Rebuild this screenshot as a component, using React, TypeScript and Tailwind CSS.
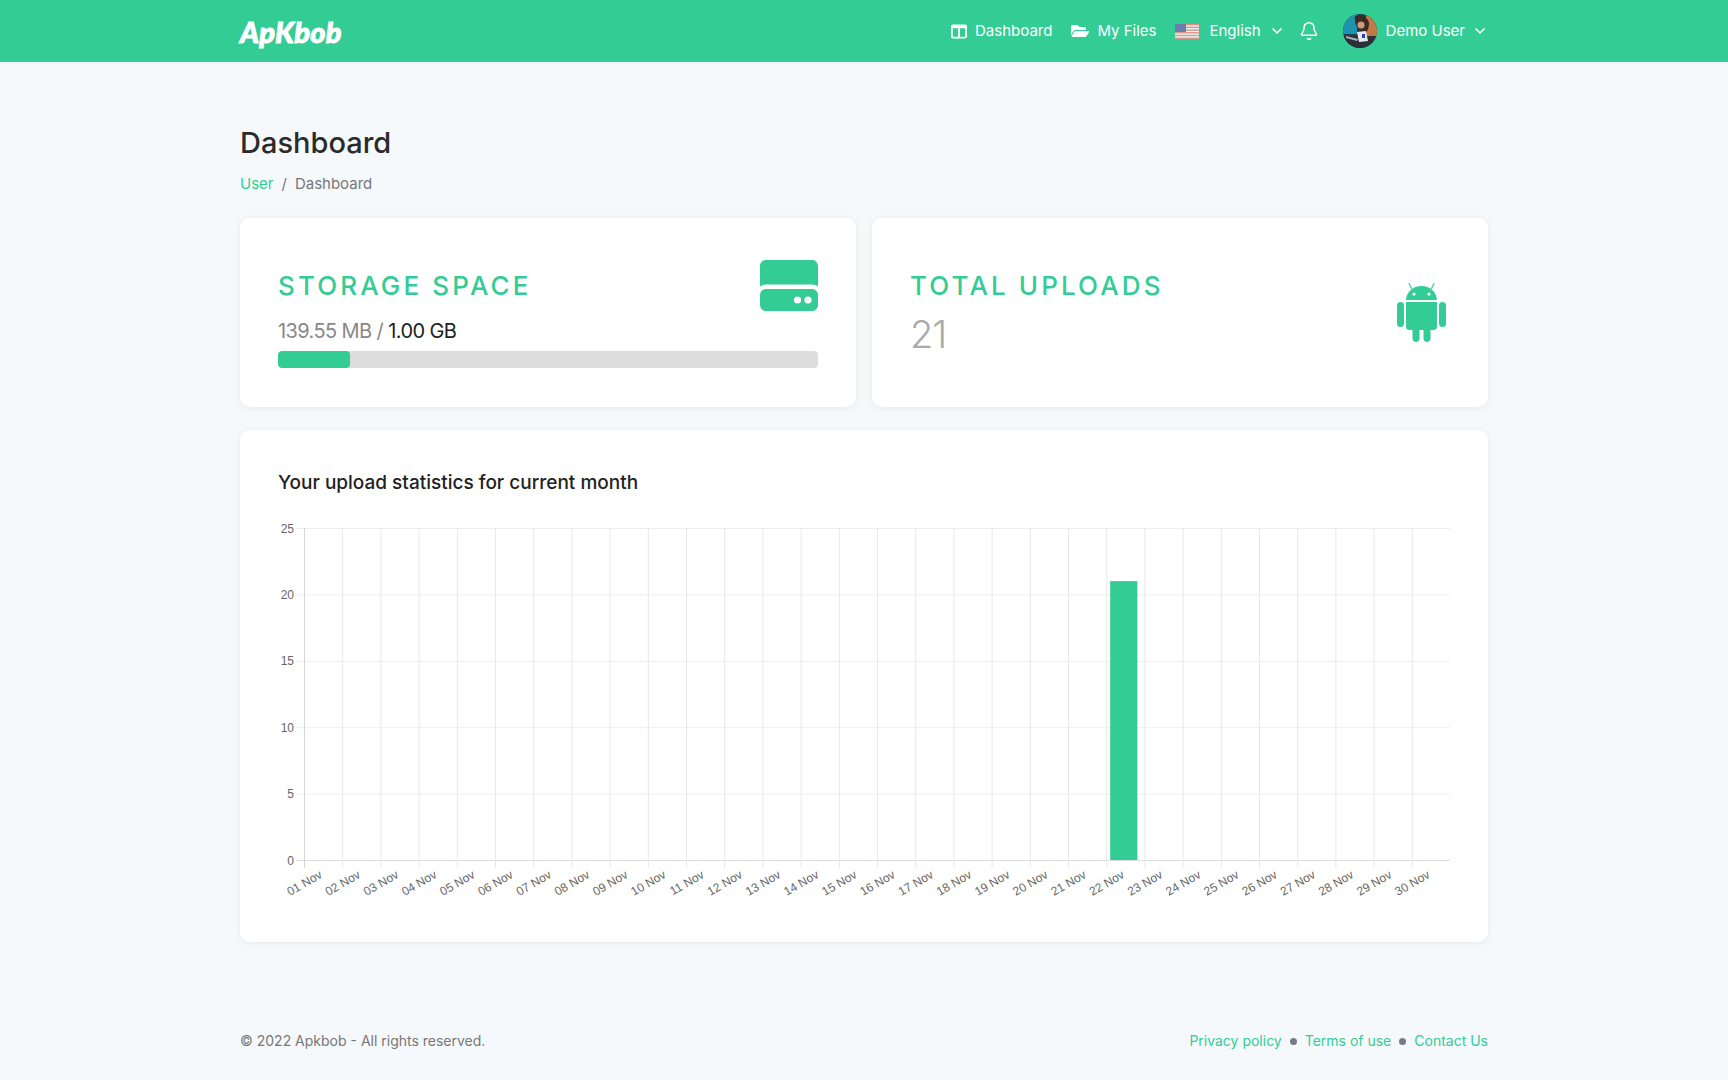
import { Bell, ChevronDown } from "lucide-react"
import { FaFolderOpen } from "react-icons/fa"

const ColumnsIcon = () => (
  <svg className="h-[15px] w-[16px]" viewBox="0 0 16 15" fill="none">
    <path fillRule="evenodd" clipRule="evenodd" d="M2 0.5H14C15.1 0.5 16 1.4 16 2.5V12.5C16 13.6 15.1 14.5 14 14.5H2C0.9 14.5 0 13.6 0 12.5V2.5C0 1.4 0.9 0.5 2 0.5ZM1.8 4.2V12.7H7.1V4.2H1.8ZM8.9 4.2V12.7H14.2V4.2H8.9Z" fill="#fff" />
  </svg>
)

const FlagIcon = () => (
  <svg className="h-[15px] w-[24px] opacity-90" viewBox="0 0 24 15">
    <rect width="24" height="15" fill="#fff" />
    <rect y="0" width="24" height="1.4" fill="#f28a8a" />
    <rect y="2.7" width="24" height="1.4" fill="#f28a8a" />
    <rect y="5.4" width="24" height="1.4" fill="#f28a8a" />
    <rect y="8.1" width="24" height="1.4" fill="#f28a8a" />
    <rect y="10.8" width="24" height="1.4" fill="#f28a8a" />
    <rect y="13.6" width="24" height="1.4" fill="#f28a8a" />
    <rect width="11" height="8" fill="#6f76b0" />
  </svg>
)

const Avatar = () => (
  <svg className="h-[34px] w-[34px]" viewBox="0 0 34 34">
    <defs>
      <clipPath id="av">
        <circle cx="17" cy="17" r="17" />
      </clipPath>
    </defs>
    <g clipPath="url(#av)">
      <rect width="34" height="34" fill="#1f3f4c" />
      <rect width="14" height="20" fill="#1d93ad" />
      <rect x="23" width="11" height="24" fill="#c27a45" />
      <rect y="22" width="34" height="12" fill="#2b2f36" />
      <path d="M12 2C18 0 26 3 26 10C26 14 24 18 22 19L16 17C13 12 11 7 12 2Z" fill="#3a2a24" />
      <circle cx="18" cy="11" r="3.6" fill="#c99a80" />
      <path d="M14 18L23 17L25 27L16 28Z" fill="#e8e8f0" />
      <rect x="19" y="20" width="3" height="4" fill="#2b3fc0" />
      <path d="M3 22L15 25L14 27L3 24Z" fill="#a9b3bb" />
    </g>
  </svg>
)

const DriveIcon = () => (
  <svg className="h-[51px] w-[58px]" viewBox="0 0 58 51">
    <path d="M6 0H52C55.3 0 58 2.7 58 6V26.5C56.5 25.2 54.5 24.5 52 24.5H6C3.5 24.5 1.5 25.2 0 26.5V6C0 2.7 2.7 0 6 0Z" fill="#33cc95" />
    <path fillRule="evenodd" clipRule="evenodd" d="M6 29H52C55.3 29 58 31.7 58 35V45C58 48.3 55.3 51 52 51H6C2.7 51 0 48.3 0 45V35C0 31.7 2.7 29 6 29Z" fill="#33cc95" />
    <circle cx="37.5" cy="40" r="3.6" fill="#fff" />
    <circle cx="48" cy="40" r="3.6" fill="#fff" />
  </svg>
)

const AndroidIcon = () => (
  <svg className="h-[59px] w-[49px]" viewBox="0 0 49 59" fill="#33cc95">
    <path d="M14.5 5.5L12 0.5M34.5 5.5L37 0.5" stroke="#33cc95" strokeWidth="1.2" strokeLinecap="round" />
    <path fillRule="evenodd" clipRule="evenodd" d="M24.5 3C33 3 39.5 9 40 17H9C9.5 9 16 3 24.5 3ZM17 9.5A1.6 1.6 0 1 0 17 12.7A1.6 1.6 0 1 0 17 9.5ZM32 9.5A1.6 1.6 0 1 0 32 12.7A1.6 1.6 0 1 0 32 9.5Z" />
    <path d="M9 19H40V44C40 46.2 38.2 47 36.5 47H33.5V55.5C33.5 57.5 31.9 59 30 59C28.1 59 26.5 57.5 26.5 55.5V47H22.5V55.5C22.5 57.5 20.9 59 19 59C17.1 59 15.5 57.5 15.5 55.5V47H12.5C10.8 47 9 46.2 9 44V19Z" />
    <rect x="0" y="19" width="7" height="25" rx="3.5" />
    <rect x="42" y="19" width="7" height="25" rx="3.5" />
  </svg>
)

const days = Array.from({ length: 30 }, (_, i) => String(i + 1).padStart(2, "0") + " Nov")
const yTicks = [0, 5, 10, 15, 20, 25]

const UploadChart = () => {
  const left = 26
  const right = 1172
  const top = 8
  const bottom = 340
  const col = (right - left) / 30
  const y = (v: number) => bottom - (v / 25) * (bottom - top)

  return (
    <svg className="block h-[385px] w-[1172px] font-['Liberation_Sans',Arial,sans-serif]" viewBox="0 0 1172 385">
      {yTicks.map((v) => (
        <g key={v}>
          <line x1={left - 8} x2={right} y1={y(v) + 0.5} y2={y(v) + 0.5} stroke={v === 0 ? "#dcdcdc" : "#eeeeee"} />
          <text x={left - 10} y={y(v) + 4.5} textAnchor="end" fontSize="12" fill="#666">{v}</text>
        </g>
      ))}
      {Array.from({ length: 31 }, (_, i) => (
        <line key={i} x1={left + i * col + 0.5} x2={left + i * col + 0.5} y1={top} y2={bottom + 8} stroke={i === 0 ? "#d5d5d5" : "#e8e8e8"} />
      ))}
      <rect x={left + 21 * col + 4} y={y(21)} width={col - 11} height={bottom - y(21)} fill="#33cc95" />
      {days.map((d, i) => {
        const x = left + i * col + 19
        return (
          <text key={d} x={x} y={357} transform={`rotate(-30 ${x} 357)`} textAnchor="end" fontSize="12" fill="#666">
            {d}
          </text>
        )
      })}
    </svg>
  )
}

export default function App() {
  return (
    <div className="flex min-h-screen flex-col bg-[#f5f9fc] font-['Inter',sans-serif] text-[#333]">
      <header className="h-[62px] bg-[#33cc95]">
        <div className="mx-auto flex h-full w-[1248px] items-center justify-between">
          <a className="font-['Lato',sans-serif] text-[29px] font-black italic leading-none tracking-[0.01em] text-white [-webkit-text-stroke:1px_white]">
            ApKbob
          </a>
          <nav className="flex items-center text-[15px] text-white">
            <a className="flex items-center gap-2">
              <ColumnsIcon />
              Dashboard
            </a>
            <a className="ml-[19px] flex items-center gap-2">
              <FaFolderOpen className="h-[16px] w-[18px]" />
              My Files
            </a>
            <a className="ml-[19px] flex items-center gap-[10px]">
              <FlagIcon />
              English
              <ChevronDown className="-ml-[2px] h-[16px] w-[16px]" strokeWidth={2.5} />
            </a>
            <Bell className="ml-[14px] h-[20px] w-[20px]" strokeWidth={1.8} />
            <a className="ml-[24px] flex items-center gap-[9px]">
              <Avatar />
              Demo User
              <ChevronDown className="-ml-[2px] h-[16px] w-[16px]" strokeWidth={2.5} />
            </a>
          </nav>
        </div>
      </header>

      <main className="mx-auto w-[1248px] flex-1 pt-[61px]">
        <h1 className="text-[29px] font-medium leading-[40px] text-[#2b2b2b]">Dashboard</h1>
        <div className="mt-[10px] flex items-center gap-[8px] text-[15px] leading-[22px] text-[#777]">
          <a className="text-[#33cc95]">User</a>
          <span>/</span>
          <span>Dashboard</span>
        </div>

        <div className="mt-[23px] grid grid-cols-2 gap-[16px]">
          <section className="h-[189px] rounded-[10px] bg-white px-[38px] pt-[42px] shadow-[0_1px_6px_rgba(0,0,0,0.07)]">
            <div className="flex items-start justify-between">
              <h2 className="pt-[10px] text-[26px] font-medium leading-[32px] tracking-[0.12em] text-[#33cc95]">STORAGE SPACE</h2>
              <DriveIcon />
            </div>
            <p className="mt-[6px] text-[20px] leading-[28px] tracking-[-0.03em] text-[#888]">
              139.55 MB / <span className="text-[#222]">1.00 GB</span>
            </p>
            <div className="mt-[6px] h-[17px] overflow-hidden rounded-[4px] bg-[#dddddd]">
              <div className="h-full w-[72px] rounded-[4px] bg-[#33cc95]" />
            </div>
          </section>

          <section className="flex h-[189px] items-start justify-between rounded-[10px] bg-white pl-[38px] pr-[42px] pt-[52px] shadow-[0_1px_6px_rgba(0,0,0,0.07)]">
            <div>
              <h2 className="text-[26px] font-medium leading-[32px] tracking-[0.12em] text-[#33cc95]">TOTAL UPLOADS</h2>
              <p className="mt-[9px] text-[38px] font-light leading-[46px] tracking-[-0.03em] text-[#aaa]">21</p>
            </div>
            <div className="mt-[13px]">
              <AndroidIcon />
            </div>
          </section>
        </div>

        <section className="mt-[23px] h-[512px] rounded-[10px] bg-white px-[38px] pt-[38px] shadow-[0_1px_6px_rgba(0,0,0,0.07)]">
          <h3 className="text-[19px] font-medium leading-[30px] text-[#222]">Your upload statistics for current month</h3>
          <div className="mt-[22px]">
            <UploadChart />
          </div>
        </section>
      </main>

      <footer className="mx-auto flex h-[138px] w-[1248px] items-start justify-between pt-[88px] text-[14px] leading-[22px]">
        <span className="text-[#777]">© 2022 Apkbob - All rights reserved.</span>
        <div className="flex items-center gap-[8px] text-[#33cc95]">
          <a>Privacy policy</a>
          <span className="h-[7px] w-[7px] rounded-full bg-[#777b8c]" />
          <a>Terms of use</a>
          <span className="h-[7px] w-[7px] rounded-full bg-[#777b8c]" />
          <a>Contact Us</a>
        </div>
      </footer>
    </div>
  )
}
